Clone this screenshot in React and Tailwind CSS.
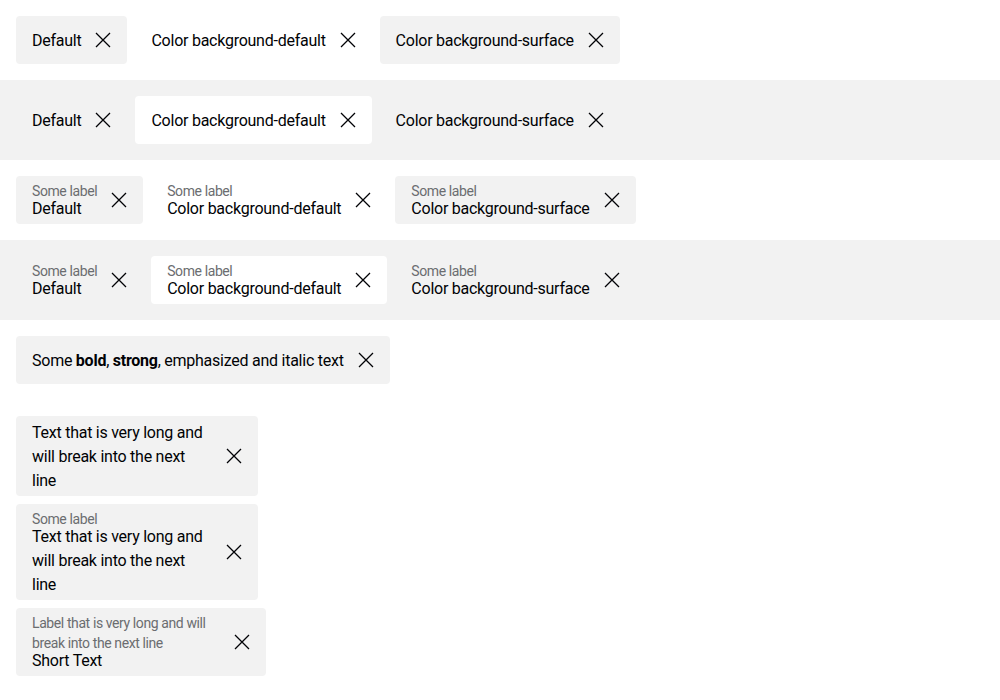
import React from 'react';

const FONT = { fontFamily: 'Roboto, "Liberation Sans", sans-serif' };

const BG = {
  default: 'bg-[#f2f2f2]',
  white: 'bg-white',
  surface: 'bg-[#f2f2f2]',
};

function CloseIcon() {
  return (
    <svg width="24" height="24" viewBox="0 0 24 24" className="shrink-0" aria-hidden="true">
      <path d="M5 5L19 19M19 5L5 19" stroke="#010205" strokeWidth="1.3" fill="none" />
    </svg>
  );
}

function Tag({ bg = 'default', label, children, className = '' }) {
  return (
    <div
      className={`inline-flex items-center gap-[10px] min-h-[48px] py-1 pl-4 pr-3 rounded-[4px] text-[#010205] ${BG[bg]} ${className}`}
    >
      <div className="flex flex-col flex-1 translate-y-px">
        {label && <span className="text-[14px] leading-[20px] tracking-[-0.4px] text-[#6b6d70]">{label}</span>}
        <span className={`text-[16px] leading-[24px] tracking-[-0.25px] ${label ? '-mt-1' : ''}`}>{children}</span>
      </div>
      <CloseIcon />
    </div>
  );
}

function Row({ band, labeled }) {
  const label = labeled ? 'Some label' : undefined;
  return (
    <div className={`flex gap-2 ${band ? 'bg-[#f2f2f2] px-4 py-4' : 'px-4'}`}>
      <Tag bg="default" label={label}>Default</Tag>
      <Tag bg="white" label={label}>Color background-default</Tag>
      <Tag bg="surface" label={label}>Color background-surface</Tag>
    </div>
  );
}

export default function App() {
  return (
    <div className="min-h-[700px] bg-white pt-4" style={FONT}>
      <div className="flex flex-col gap-4">
        <Row />
        <Row band />
        <Row labeled />
        <Row band labeled />
        <div className="px-4">
          <Tag>
            Some <b className="font-bold">bold</b>, <strong className="font-bold">strong</strong>, emphasized and italic text
          </Tag>
        </div>
      </div>
      <div className="flex flex-col items-start gap-2 px-4 mt-8">
        <Tag className="w-[242px]">Text that is very long and will break into the next line</Tag>
        <Tag className="w-[242px]" label="Some label">Text that is very long and will break into the next line</Tag>
        <Tag className="w-[250px]" label="Label that is very long and will break into the next line">Short Text</Tag>
      </div>
    </div>
  );
}
